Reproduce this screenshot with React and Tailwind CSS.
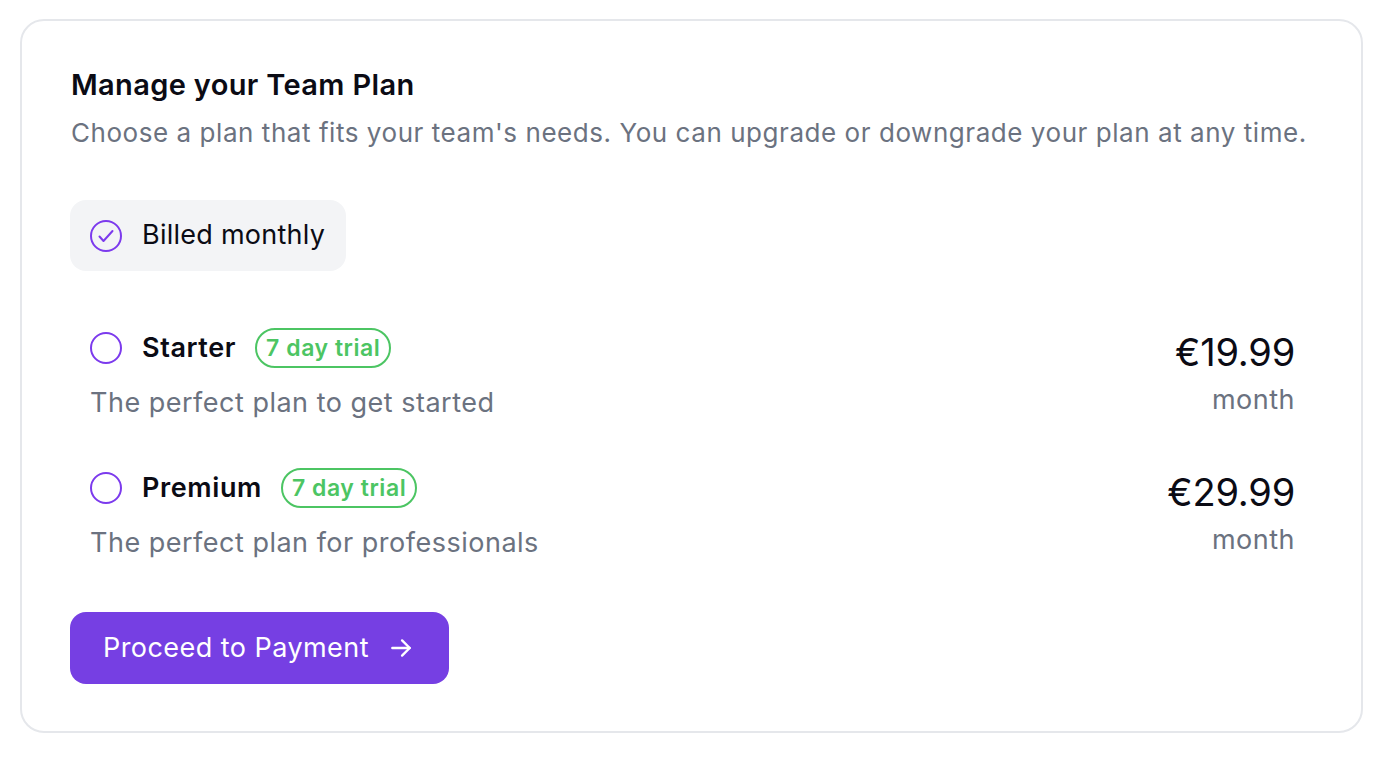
import React from "react";

function CheckCircle() {
  return (
    <svg width="32" height="32" viewBox="0 0 32 32" fill="none">
      <circle cx="16" cy="16" r="15" stroke="#7c3aed" strokeWidth="2" />
      <path d="M9.5 16.5l4 4.5 9-10" stroke="#7c3aed" strokeWidth="2" strokeLinecap="round" strokeLinejoin="round" />
    </svg>
  );
}

function Radio() {
  return <span className="block w-[32px] h-[32px] rounded-full border-2 border-[#7c3aed] shrink-0" />;
}

function Plan({ name, desc, price }) {
  return (
    <div className="flex justify-between pl-[20px] pr-[17px]">
      <div>
        <div className="flex items-center h-[40px]">
          <Radio />
          <span className="ml-[20px] text-[27px] tracking-[0.6px] font-semibold text-[#0b0b14]">{name}</span>
          <span className="ml-[19px] h-[40px] px-[9px] flex items-center rounded-full border-2 border-[#4cc563] text-[#4cc563] text-[23px] tracking-[0.55px] font-semibold">7 day trial</span>
        </div>
        <div className="mt-[19px] text-[27px] tracking-[0.5px] leading-[32px] text-[#6b7280]">{desc}</div>
      </div>
      <div className="flex flex-col items-end pt-[4px]">
        <div className="text-[38px] leading-[40px] text-[#0b0b14] tracking-[-0.2px]">{price}</div>
        <div className="mt-[12px] text-[27px] tracking-[0.5px] leading-[32px] text-[#6b7280]">month</div>
      </div>
    </div>
  );
}

export default function App() {
  return (
    <div className="w-[1384px] h-[764px] bg-white pt-[19px] pl-[20px]" style={{ fontFamily: "Inter, 'Noto Sans', sans-serif" }}>
      <div className="w-[1343px] h-[714px] rounded-[24px] border-2 border-[#e5e7eb] pl-[48px] pr-[49px] pt-[48px]">
        <h1 className="text-[29px] leading-[32px] font-semibold text-[#0b0b14] tracking-[0.35px] ml-[1px]">Manage your Team Plan</h1>
        <p className="mt-[16px] text-[26px] tracking-[0.55px] leading-[32px] text-[#6b7280] ml-[1px]">Choose a plan that fits your team's needs. You can upgrade or downgrade your plan at any time.</p>
        <div className="mt-[51px] inline-flex items-center h-[71px] rounded-[16px] bg-[#f3f4f6] pl-[20px] pr-[21px]">
          <CheckCircle />
          <span className="ml-[20px] text-[27px] tracking-[0.25px] text-[#0b0b14]">Billed monthly</span>
        </div>
        <div className="mt-[57px] flex flex-col gap-[49px]">
          <Plan name="Starter" desc="The perfect plan to get started" price="€19.99" />
          <Plan name="Premium" desc="The perfect plan for professionals" price="€29.99" />
        </div>
        <button className="mt-[53px] h-[72px] rounded-[16px] bg-[#763fe3] text-white flex items-center pl-[33px] pr-[35px] text-[27px] tracking-[0.45px]">
          Proceed to Payment
          <svg className="ml-[19px]" width="26" height="26" viewBox="0 0 24 24" fill="none" stroke="white" strokeWidth="2.2" strokeLinecap="round" strokeLinejoin="round">
            <path d="M4 12h16" />
            <path d="m13 5 7 7-7 7" />
          </svg>
        </button>
      </div>
    </div>
  );
}
